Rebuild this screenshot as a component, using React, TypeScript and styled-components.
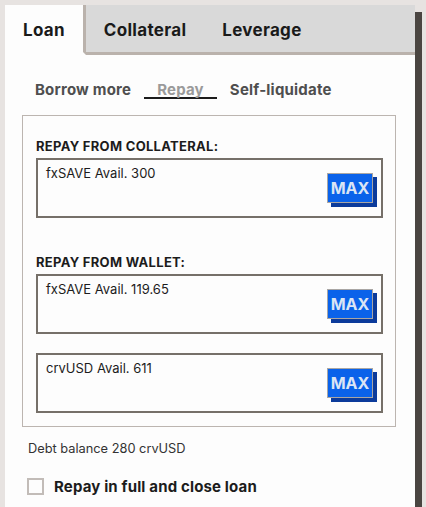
import React, { useState } from 'react';
import styled, { createGlobalStyle } from 'styled-components';

const GlobalStyle = createGlobalStyle`
  body {
    margin: 0;
    background: #e7e3e1;
    font-family: Inter, "Liberation Sans", sans-serif;
    color: #1c1c1c;
  }
`;

const tabs = ['Loan', 'Collateral', 'Leverage'];
const subTabs = ['Borrow more', 'Repay', 'Self-liquidate'];

const MaxInput = ({ token, avail }: { token: string; avail: string }) => (
  <InputBox>
    <InputLabel>
      {token} Avail. {avail}
    </InputLabel>
    <MaxButton>MAX</MaxButton>
  </InputBox>
);

const App = () => {
  const [tab, setTab] = useState('Loan');
  const [sub, setSub] = useState('Repay');
  const [closeLoan, setCloseLoan] = useState(false);

  return (
    <Page>
      <GlobalStyle />
      <Card>
        <TabBar>
          {tabs.map((t) => (
            <Tab key={t} $active={t === tab} onClick={() => setTab(t)}>
              {t}
            </Tab>
          ))}
          <TabFiller />
        </TabBar>
        <Body>
          <SubTabs>
            {subTabs.map((s) => (
              <SubTab key={s} $active={s === sub} onClick={() => setSub(s)}>
                {s}
              </SubTab>
            ))}
          </SubTabs>
          <RepayBox>
            <Section>
              <SectionTitle>Repay from collateral:</SectionTitle>
              <MaxInput token="fxSAVE" avail="300" />
            </Section>
            <Section>
              <SectionTitle>Repay from wallet:</SectionTitle>
              <MaxInput token="fxSAVE" avail="119.65" />
              <MaxInput token="crvUSD" avail="611" />
            </Section>
          </RepayBox>
          <DebtLine>Debt balance 280 crvUSD</DebtLine>
          <CheckRow onClick={() => setCloseLoan(!closeLoan)}>
            <CheckBox $checked={closeLoan} />
            Repay in full and close loan
          </CheckRow>
        </Body>
      </Card>
    </Page>
  );
};

export default App;

const Page = styled.div`
  padding: 5px 11px 0 5px;
  height: 507px;
  box-sizing: border-box;
  overflow: hidden;
`;

const Card = styled.div`
  background: #fdfdfd;
  box-shadow: 7px 7px 0 #4a4541;
  min-height: 560px;
`;

const TabBar = styled.div`
  display: flex;
  background: #d9d9d9;
`;

const Tab = styled.button<{ $active: boolean }>`
  font: 700 17px Inter, "Liberation Sans", sans-serif;
  letter-spacing: 0.3px;
  color: #1a1a1a;
  box-sizing: border-box;
  height: 50px;
  padding: 2px 18px 0;
  border: none;
  border-bottom: 3px solid ${(p) => (p.$active ? 'transparent' : '#bab2ac')};
  border-right: ${(p) => (p.$active ? '3px solid #bab2ac' : 'none')};
  background: ${(p) => (p.$active ? '#fdfdfd' : 'transparent')};
  cursor: pointer;
`;

const TabFiller = styled.div`
  flex: 1;
  border-bottom: 3px solid #bab2ac;
`;

const Body = styled.div`
  padding: 22px 19px 30px 17px;
`;

const SubTabs = styled.div`
  display: flex;
  margin-bottom: 16px;
`;

const SubTab = styled.button<{ $active: boolean }>`
  font: 700 15px Inter, "Liberation Sans", sans-serif;
  letter-spacing: 0.2px;
  color: ${(p) => (p.$active ? '#9a9a9a' : '#4f4f4f')};
  background: none;
  border: none;
  border-bottom: 2px solid ${(p) => (p.$active ? '#1c1c1c' : 'transparent')};
  box-sizing: border-box;
  padding: 3px 13px 0;
  height: 22px;
  cursor: pointer;
`;

const RepayBox = styled.div`
  border: 1px solid #bcb5b0;
  padding: 22px 12px 13px 13px;
  display: flex;
  flex-direction: column;
  gap: 36px;
`;

const Section = styled.div`
  display: flex;
  flex-direction: column;
  gap: 19px;
`;

const SectionTitle = styled.div`
  font-size: 13px;
  font-weight: 700;
  letter-spacing: 0.3px;
  text-transform: uppercase;
  line-height: 16px;
  margin-bottom: -15px;
`;

const InputBox = styled.div`
  height: 60px;
  box-sizing: border-box;
  border: 2px solid #767069;
  display: flex;
  justify-content: space-between;
  padding: 5px 8px 0 8px;
`;

const InputLabel = styled.div`
  font-size: 13px;
  line-height: 16px;
`;

const MaxButton = styled.button`
  align-self: center;
  margin-top: -5px;
  width: 46px;
  height: 30px;
  background: #0a62ea;
  border: 1px solid #a9a6a4;
  box-shadow: 4px 4px 0 #0c3b9b;
  color: #dbe5f4;
  font: 700 16px Inter, "Liberation Sans", sans-serif;
  padding: 0;
  cursor: pointer;
`;

const DebtLine = styled.div`
  font-size: 12.8px;
  line-height: 16px;
  color: #333;
  margin: 14px 0 0 6px;
`;

const CheckRow = styled.label`
  display: flex;
  align-items: center;
  gap: 10px;
  margin: 20px 0 0 5px;
  font-size: 15px;
  font-weight: 700;
  letter-spacing: 0.15px;
  cursor: pointer;
`;

const CheckBox = styled.span<{ $checked: boolean }>`
  width: 17px;
  height: 17px;
  box-sizing: border-box;
  border: 2px solid #c2bcb8;
  background: ${(p) => (p.$checked ? '#0a62ea' : '#fdfdfd')};
`;
